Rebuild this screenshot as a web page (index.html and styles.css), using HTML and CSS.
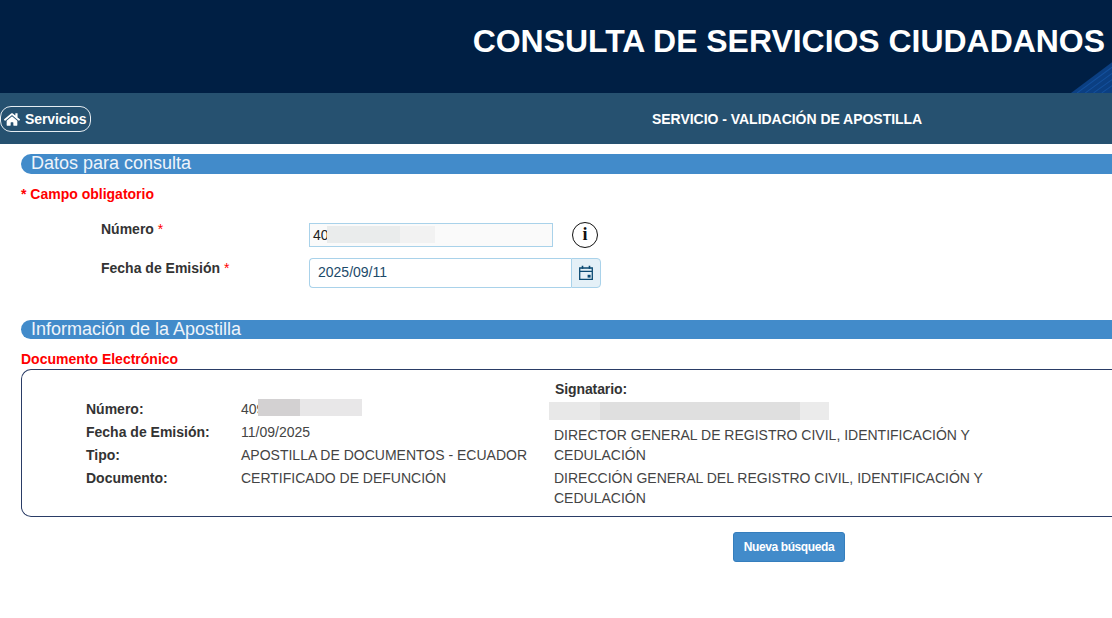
FILE: index.html
```html
<!DOCTYPE html>
<html lang="es">
<head>
<meta charset="utf-8">
<title>Consulta de Servicios Ciudadanos</title>
<link rel="stylesheet" href="styles.css">
</head>
<body>
<header class="banner">
  <h1 class="banner-title">CONSULTA DE SERVICIOS CIUDADANOS</h1>
  <svg class="banner-art" viewBox="0 0 40 30" aria-hidden="true"><polygon points="0,30 40,0 40,30" fill="#0b3f82"/><path d="M6 30L40 5M14 30L40 11M22 30L40 17M30 30L40 23" stroke="#14509c" stroke-width="1"/></svg>
</header>
<nav class="navbar">
  <a class="home-btn"><svg class="home-icon" viewBox="0 0 576 512"><path fill="#fff" d="M280 148L96 300v164c0 9 7 16 16 16l112-1c9 0 16-7 16-16V368c0-9 7-16 16-16h64c9 0 16 7 16 16v95c0 9 7 16 16 16l112 1c9 0 16-7 16-16V300L296 148c-5-4-11-4-16 0zM572 251l-84-69V44c0-7-5-12-12-12h-56c-7 0-12 5-12 12v72l-89-74c-18-14-44-14-61 0L4 251c-5 4-6 12-2 17l26 31c4 5 12 6 17 2L280 107c5-4 11-4 16 0l235 194c5 4 13 3 17-2l26-31c4-5 3-13-2-17z"/></svg>Servicios</a>
  <div class="nav-title">SERVICIO - VALIDACIÓN DE APOSTILLA</div>
</nav>
<main class="content">
  <h2 class="section-bar">Datos para consulta</h2>
  <p class="required-note">* Campo obligatorio</p>
  <div class="form">
    <div class="form-row row-number">
      <label class="form-label">Número <span class="star">*</span></label>
      <div class="number-input">40<span class="blur blur-input-a"></span><span class="blur blur-input-b"></span></div>
      <span class="info-icon">i</span>
    </div>
    <div class="form-row row-date">
      <label class="form-label">Fecha de Emisión <span class="star">*</span></label>
      <div class="date-group">
        <div class="date-input">2025/09/11</div>
        <div class="date-btn"><svg viewBox="0 0 16 16" width="16" height="16"><path fill="none" stroke="#0b4a72" stroke-width="1.3" d="M1.7 3h12.6v11.3H1.7zM1.7 6.3h12.6"/><path stroke="#0b4a72" stroke-width="1.6" d="M4.5.8v3M11.5.8v3"/><rect x="9.6" y="9.8" width="3" height="2.8" fill="#0b4a72"/></svg></div>
      </div>
    </div>
  </div>
  <h2 class="section-bar section-info">Información de la Apostilla</h2>
  <h3 class="doc-title">Documento Electrónico</h3>
  <section class="doc-box">
    <dl class="doc-left">
      <dt>Número:</dt><dd class="doc-number">409<span class="blur blur-doc-a"></span><span class="blur blur-doc-b"></span></dd>
      <dt>Fecha de Emisión:</dt><dd>11/09/2025</dd>
      <dt>Tipo:</dt><dd>APOSTILLA DE DOCUMENTOS - ECUADOR</dd>
      <dt>Documento:</dt><dd>CERTIFICADO DE DEFUNCIÓN</dd>
    </dl>
    <div class="doc-right">
      <div class="signer-label">Signatario:</div>
      <div class="signer-name"><span class="blur blur-sig-a"></span><span class="blur blur-sig-b"></span><span class="blur blur-sig-c"></span></div>
      <p class="signer-text">DIRECTOR GENERAL DE REGISTRO CIVIL, IDENTIFICACIÓN Y CEDULACIÓN</p>
      <p class="signer-text">DIRECCIÓN GENERAL DEL REGISTRO CIVIL, IDENTIFICACIÓN Y CEDULACIÓN</p>
    </div>
  </section>
  <div class="actions"><button class="primary-btn">Nueva búsqueda</button></div>
</main>
</body>
</html>
```
FILE: styles.css
```css
* { box-sizing: border-box; }
html, body { margin: 0; padding: 0; height: 618px; overflow: hidden; }
body { width: 1112px; background: #fff; font-family: "Liberation Sans", Arial, sans-serif; font-size: 14px; color: #333; }

.banner { position: relative; height: 93px; background: #001f44; display: flex; justify-content: flex-end; align-items: flex-start; overflow: hidden; }
.banner-title { margin: 22px 7px 0 0; font-size: 31.95px; line-height: 38px; font-weight: bold; color: #fff; white-space: nowrap; }
.banner-art { position: absolute; right: 0; bottom: 0; width: 41px; height: 31px; }

.navbar { position: relative; height: 51px; background: #265170; display: flex; align-items: center; }
.home-btn { display: flex; align-items: center; height: 26px; width: 91px; margin-top: 1px; padding-left: 3px; border: 1px solid #e6edf2; border-radius: 11px; color: #fff; font-weight: bold; font-size: 14px; letter-spacing: -0.1px; }
.home-icon { width: 16px; height: 15px; margin-right: 5px; }
.nav-title { position: absolute; left: 652px; top: 18px; color: #fff; font-weight: bold; font-size: 14px; line-height: 17px; white-space: nowrap; letter-spacing: -0.03px; }

.content { padding: 10px 0 0 21px; width: 1112px; }
.section-bar { margin: 0; height: 20px; background: #428bca; color: #eef4fa; font-weight: normal; font-size: 18px; line-height: 18px; padding-left: 10px; border-radius: 10px 0 0 10px; }
.section-info { margin-top: 32px; height: 19px; }
.required-note { margin: 11px 0 0; color: #f00; font-weight: bold; font-size: 14px; line-height: 18px; }

.form { margin-top: 18px; padding-left: 80px; }
.form-row { display: flex; align-items: flex-start; }
.row-number { height: 37px; }
.row-date { height: 30px; }
.form-label { width: 208px; font-weight: bold; font-size: 14px; line-height: 16px; color: #333; }
.row-date .form-label { padding-top: 2px; }
.star { color: #f00; font-weight: normal; }

.number-input { position: relative; width: 244px; height: 24px; margin-top: 2px; padding-left: 3px; background: #fafafa; border: 1px solid #a9d2ea; font-size: 14px; line-height: 22px; color: #222; }
.info-icon { width: 26px; height: 26px; margin: 1px 0 0 19px; border: 1.5px solid #111; border-radius: 50%; text-align: center; font-family: "Liberation Serif", serif; font-weight: bold; font-size: 18px; line-height: 23px; color: #111; }

.date-group { display: flex; width: 292px; height: 30px; }
.date-input { flex: 1; border: 1px solid #a9d2ea; border-right: 0; border-radius: 4px 0 0 4px; padding-left: 8px; font-size: 14px; line-height: 27px; color: #1c4a6a; }
.date-btn { width: 30px; background: #e4f0f7; border: 1px solid #a9d2ea; border-radius: 0 4px 4px 0; display: flex; align-items: center; justify-content: center; }

.blur { position: absolute; display: block; }
.blur-input-a { left: 17px; top: 2px; width: 73px; height: 17px; background: #eaecec; }
.blur-input-b { left: 90px; top: 2px; width: 35px; height: 17px; background: #f2f2f2; }

.doc-title { margin: 11px 0 0; color: #f00; font-size: 14px; line-height: 18px; font-weight: bold; }
.doc-box { margin-top: 1px; height: 148px; border: 1px solid #2a3c66; border-radius: 10px 0 0 10px; border-right: 0; display: flex; position: relative; overflow: hidden; }

.doc-left { margin: 28px 0 0 64px; width: 469px; display: grid; grid-template-columns: 155px 1fr; grid-auto-rows: 23px; align-content: start; }
.doc-left dt { font-weight: bold; font-size: 14px; line-height: 23px; color: #333; }
.doc-left dd { margin: 0; font-size: 14px; line-height: 23px; color: #444; white-space: nowrap; }
.doc-number { position: relative; }
.blur-doc-a { left: 17px; top: 1px; width: 42px; height: 17px; background: #d3d1d2; }
.blur-doc-b { left: 59px; top: 1px; width: 62px; height: 17px; background: #e8e7e8; }

.doc-right { width: 440px; padding-top: 10px; }
.signer-label { font-weight: bold; font-size: 14px; line-height: 18px; color: #333; letter-spacing: -0.1px; }
.signer-name { position: relative; height: 19px; margin-top: 3px; }
.blur-sig-a { left: -6px; top: 1px; width: 51px; height: 18px; background: #e8e8e8; }
.blur-sig-b { left: 45px; top: 1px; width: 200px; height: 18px; background: #dfdfdf; }
.blur-sig-c { left: 245px; top: 1px; width: 29px; height: 18px; background: #ebebeb; }
.signer-text { margin: 3px 0 0 -1px; font-size: 14px; line-height: 20px; color: #444; }
.signer-name + .signer-text { margin-top: 5px; }

.actions { margin-top: 15px; padding-left: 712px; }
.primary-btn { width: 112px; height: 30px; padding: 0; background: #428bca; border: 1px solid #357ebd; border-radius: 3px; color: #fff; font-family: inherit; font-size: 12px; font-weight: bold; letter-spacing: -0.4px; }
```
